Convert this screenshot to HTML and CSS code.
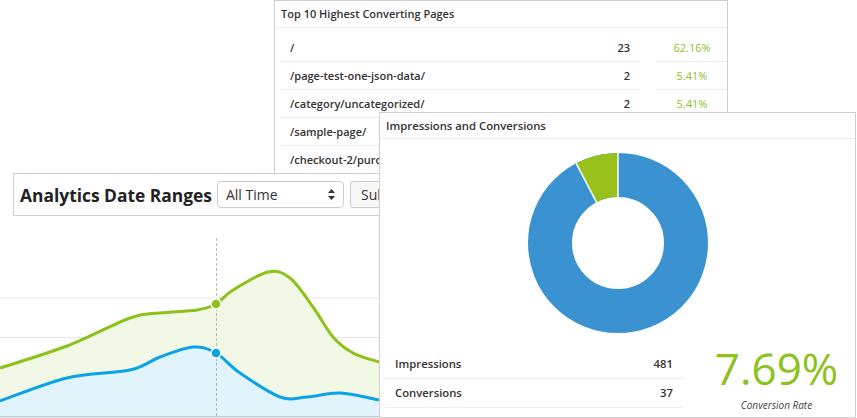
FILE: index.html
```html
<!DOCTYPE html>
<html lang="en">
<head>
  <meta charset="UTF-8" />
  <meta name="viewport" content="width=device-width, initial-scale=1.0" />
  <title>Conversion Analytics</title>
  <link rel="stylesheet" href="styles.css">
</head>
<body>
  <div class="stage">

    <section class="panel pages">
      <div class="panel-head">Top 10 Highest Converting Pages</div>
      <div class="page-list">
        <div class="page-row">
          <div class="page-cell"><span>/</span><span>23</span></div>
          <div class="rate-cell">62.16%</div>
        </div>
        <div class="page-row">
          <div class="page-cell"><span>/page-test-one-json-data/</span><span>2</span></div>
          <div class="rate-cell">5.41%</div>
        </div>
        <div class="page-row">
          <div class="page-cell"><span>/category/uncategorized/</span><span>2</span></div>
          <div class="rate-cell">5.41%</div>
        </div>
        <div class="page-row">
          <div class="page-cell"><span>/sample-page/</span><span>2</span></div>
          <div class="rate-cell">5.41%</div>
        </div>
        <div class="page-row">
          <div class="page-cell"><span>/checkout-2/purchase-confirmation/</span><span>1</span></div>
          <div class="rate-cell">2.70%</div>
        </div>
      </div>
    </section>

    <section class="panel ranges">
      <h1 class="ranges-title">Analytics Date Ranges</h1>
      <div class="select">
        <span>All Time</span>
        <svg width="7" height="11" viewBox="0 0 7 11">
          <path d="M3.5 0 L7 4 L0 4 Z M0 7 L7 7 L3.5 11 Z" fill="#333" />
        </svg>
      </div>
      <button class="submit-btn">Submit</button>
    </section>

    <div class="trend">
      <svg width="379" height="180" viewBox="0 0 379 180">
        <line x1="0" y1="60" x2="379" y2="60" stroke="#e6e6e6" />
        <line x1="0" y1="99.5" x2="379" y2="99.5" stroke="#e6e6e6" />
        <line x1="0" y1="139.5" x2="379" y2="139.5" stroke="#e6e6e6" />
        <path id="greenFill" fill="#f1f9e6" />
        <path id="blueFill" fill="#e1f4fc" />
        <line x1="216.5" y1="0" x2="216.5" y2="180" stroke="#b8b8b8" stroke-dasharray="3 2" />
        <path id="greenLine" fill="none" stroke="#8cc21a" stroke-width="3" />
        <path id="blueLine" fill="none" stroke="#0ba3e6" stroke-width="3" />
        <line x1="0" y1="178.5" x2="379" y2="178.5" stroke="#c8c8c8" />
        <circle cx="216" cy="66" r="5" fill="#8cc21a" stroke="#fff" stroke-width="1.5" />
        <circle cx="216" cy="115" r="5" fill="#0ba3e6" stroke="#fff" stroke-width="1.5" />
      </svg>
    </div>

    <section class="panel impressions">
      <div class="panel-head">Impressions and Conversions</div>
      <div class="donut-wrap">
        <svg width="180" height="180" viewBox="0 0 180 180">
          <circle cx="90" cy="90" r="68" fill="none" stroke="#3b92d1" stroke-width="44" />
          <circle cx="90" cy="90" r="68" fill="none" stroke="#97c11a" stroke-width="44"
                  stroke-dasharray="32.86 500" transform="rotate(-117.7 90 90)" />
          <line x1="90" y1="44" x2="90" y2="0" stroke="#fff" stroke-width="1.5" />
          <line x1="68.6" y1="49.3" x2="48.2" y2="10.3" stroke="#fff" stroke-width="1.5" />
        </svg>
      </div>
      <div class="stats">
        <div class="stat-list">
          <div class="stat-row"><span>Impressions</span><span>481</span></div>
          <div class="stat-row"><span>Conversions</span><span>37</span></div>
        </div>
        <div class="rate-block">
          <div class="rate-big">7.69%</div>
          <div class="rate-label">Conversion Rate</div>
        </div>
      </div>
    </section>

  </div>

  <script>
    // smooth curves through the sampled points (catmull-rom -> bezier)
    const green = [[0,130],[67,108],[130,80],[160,75],[197,72],[216,66],[233,52],[268,34],[290,40],[313,69],[333,99],[353,115],[379,124]];
    const blue = [[0,163],[67,140],[130,132],[160,119],[193,109],[216,115],[240,135],[280,159],[307,159],[340,155],[379,162]];

    function smooth(pts) {
      let d = `M${pts[0][0]},${pts[0][1]}`;
      for (let i = 0; i < pts.length - 1; i++) {
        const p0 = pts[i - 1] || pts[i];
        const p1 = pts[i];
        const p2 = pts[i + 1];
        const p3 = pts[i + 2] || p2;
        const c1x = (p1[0] + (p2[0] - p0[0]) / 6).toFixed(1);
        const c1y = (p1[1] + (p2[1] - p0[1]) / 6).toFixed(1);
        const c2x = (p2[0] - (p3[0] - p1[0]) / 6).toFixed(1);
        const c2y = (p2[1] - (p3[1] - p1[1]) / 6).toFixed(1);
        d += ` C${c1x},${c1y} ${c2x},${c2y} ${p2[0]},${p2[1]}`;
      }
      return d;
    }

    const g = smooth(green);
    const b = smooth(blue);
    document.getElementById("greenLine").setAttribute("d", g);
    document.getElementById("blueLine").setAttribute("d", b);
    document.getElementById("greenFill").setAttribute("d", g + " L379,180 L0,180 Z");
    document.getElementById("blueFill").setAttribute("d", b + " L379,180 L0,180 Z");
  </script>
</body>
</html>
```

FILE: styles.css
```css
html, body {
  margin: 0;
  background-color: white;
  font-family: "Open Sans", "Liberation Sans", sans-serif;
  color: #333;
}

.stage {
  position: relative;
  width: 857px;
  height: 418px;
  overflow: hidden;
}

.panel {
  position: absolute;
  background-color: white;
  border: 1px solid #cfcfcf;
  box-sizing: border-box;
  overflow: hidden;
}

.panel-head {
  height: 26px;
  line-height: 26px;
  padding: 0 6px;
  border-bottom: 1px solid #eee;
  font-size: 11px;
  font-weight: 600;
  color: #333;
  white-space: nowrap;
}

/* top 10 pages */
.pages {
  left: 274px;
  top: 0;
  width: 454px;
  height: 174px;
  z-index: 1;
}

.page-list {
  padding-top: 6px;
}

.page-row {
  display: grid;
  grid-template-columns: 358px 70px;
  column-gap: 18px;
  margin-left: 6px;
}

.page-cell, .rate-cell {
  height: 27px;
  line-height: 27px;
  border-bottom: 1px solid #eee;
  font-size: 11px;
  white-space: nowrap;
}

.page-cell {
  display: flex;
  justify-content: space-between;
  padding: 0 9px;
  font-weight: 600;
}

.rate-cell {
  text-align: center;
  color: #8dc21f;
}

/* date range bar */
.ranges {
  left: 13px;
  top: 173px;
  width: 440px;
  height: 43px;
  display: flex;
  align-items: center;
  padding: 0 6px;
  z-index: 2;
}

.ranges-title {
  margin: 0 5px 0 0;
  font-size: 17.4px;
  font-weight: 700;
  color: #222;
  white-space: nowrap;
}

.select {
  width: 127px;
  height: 27px;
  box-sizing: border-box;
  border: 1px solid #ccc;
  border-radius: 4px;
  display: flex;
  align-items: center;
  justify-content: space-between;
  padding: 0 8px 0 8px;
  font-size: 14px;
  color: #333;
}

.submit-btn {
  margin-left: 6px;
  height: 27px;
  padding: 0 10px;
  border: 1px solid #ccc;
  border-radius: 3px;
  background-color: #f7f7f7;
  font-family: inherit;
  font-size: 14px;
  color: #333;
}

/* line chart */
.trend {
  position: absolute;
  left: 0;
  top: 238px;
  width: 379px;
  height: 180px;
}

.trend svg {
  display: block;
}

/* impressions panel */
.impressions {
  left: 379px;
  top: 112px;
  width: 477px;
  height: 306px;
  z-index: 3;
}

.impressions .panel-head {
  height: 25px;
  line-height: 25px;
  font-size: 11.3px;
}

.donut-wrap {
  display: flex;
  justify-content: center;
  padding-top: 14px;
}

.donut-wrap svg {
  display: block;
}

.stats {
  display: flex;
  margin-top: 17px;
}

.stat-list {
  width: 298px;
  margin-left: 5px;
}

.stat-row {
  display: flex;
  justify-content: space-between;
  height: 28px;
  line-height: 28px;
  padding: 0 10px;
  border-bottom: 1px solid #eee;
  font-size: 11.3px;
  font-weight: 600;
}

.rate-block {
  flex: 1;
  margin-left: 15px;
  text-align: center;
}

.rate-big {
  margin-top: -12px;
  font-size: 44px;
  line-height: 60px;
  color: #8dc21f;
}

.rate-label {
  font-size: 10px;
  line-height: 14px;
  font-style: italic;
  color: #444;
}
```
